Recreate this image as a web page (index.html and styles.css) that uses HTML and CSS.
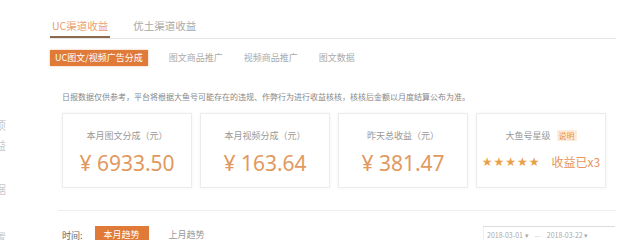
FILE: index.html
```html
<!DOCTYPE html>
<html lang="zh">
<head>
<meta charset="utf-8">
<link rel="stylesheet" href="styles.css">
</head>
<body>
<div class="page">
  <aside class="side">
    <span class="side-item s1">项</span>
    <span class="side-item s2">益</span>
    <span class="side-item s3">据</span>
    <span class="side-item s4">置</span>
  </aside>
  <main class="main">
    <nav class="tabs">
      <span class="tab active">UC渠道收益</span>
      <span class="tab">优土渠道收益</span>
    </nav>
    <div class="subtabs">
      <span class="subtab active">UC图文/视频广告分成</span>
      <span class="subtab">图文商品推广</span>
      <span class="subtab">视频商品推广</span>
      <span class="subtab">图文数据</span>
    </div>
    <p class="notice">日报数据仅供参考，平台将根据大鱼号可能存在的违规、作弊行为进行收益核核，核核后金额以月度结算公布为准。</p>
    <section class="stats">
      <div class="card">
        <div class="label">本月图文分成（元）</div>
        <div class="value">¥ 6933.50</div>
      </div>
      <div class="card">
        <div class="label">本月视频分成（元）</div>
        <div class="value">¥ 163.64</div>
      </div>
      <div class="card">
        <div class="label">昨天总收益（元）</div>
        <div class="value">¥ 381.47</div>
      </div>
      <div class="card">
        <div class="label">大鱼号星级 <span class="badge">说明</span></div>
        <div class="stars-row"><span class="stars">★★★★★</span><span class="mult">收益已x3</span></div>
      </div>
    </section>
    <div class="trend">
      <span class="trend-label">时间:</span>
      <span class="trend-btn active">本月趋势</span>
      <span class="trend-btn">上月趋势</span>
      <div class="dates">
        <span>2018-03-01 ▾</span>
        <span class="dash">—</span>
        <span>2018-03-22 ▾</span>
      </div>
    </div>
  </main>
</div>
</body>
</html>
```
FILE: styles.css
```css
* { box-sizing: border-box; }
html, body { margin: 0; background: #fff; }
body {
  font-family: "Noto Sans CJK SC", "Noto Sans", sans-serif;
  color: #999;
  overflow: hidden;
  width: 640px;
  height: 240px;
}
.page { display: flex; }
.side {
  width: 50px;
  display: flex;
  flex-direction: column;
  padding-top: 118px;
}
.side-item {
  display: block;
  width: 6px;
  overflow: hidden;
  direction: rtl;
  white-space: nowrap;
  font-size: 11px;
  line-height: 14px;
  color: #c8c8c8;
}
.s2 { margin-top: 6px; }
.s3 { margin-top: 30px; }
.s4 { margin-top: 34px; }

.main { width: 566px; padding-top: 16px; }
.tabs {
  display: flex;
  gap: 21px;
  border-bottom: 1px solid #e6e6e6;
  height: 23px;
}
.tab {
  font-size: 10.5px;
  line-height: 20px;
  height: 22px;
  padding: 0 2px;
  color: #a8a8a8;
  border-bottom: 2px solid transparent;
}
.tab.active { color: #e8a070; border-bottom-color: #8b6a4c; }

.subtabs {
  display: flex;
  align-items: center;
  gap: 21px;
  margin-top: 11px;
  height: 16px;
}
.subtab { font-size: 9px; line-height: 16px; color: #aaa; }
.subtab.active {
  background: #e07a38;
  color: #fff;
  padding: 0 5px;
  box-shadow: 0 0 2px rgba(224, 122, 56, .5);
}

.notice {
  margin: 26px 0 0 12px;
  font-size: 8px;
  line-height: 10px;
  color: #888;
  white-space: nowrap;
}

.stats {
  display: flex;
  gap: 8px;
  margin: 11px 0 0 8px;
  padding: 0 0 22px 4px;
  width: 558px;
  border-bottom: 1px solid #eeeeee;
}
.card {
  width: 130px;
  height: 75px;
  border: 1px solid #ececec;
  box-shadow: 0 0 3px rgba(0, 0, 0, .05);
  text-align: center;
  padding-top: 16px;
}
.label { font-size: 9px; line-height: 12px; color: #999; }
.value {
  margin-top: 8px;
  font-size: 21px;
  line-height: 26px;
  color: #e2995f;
  font-family: "Noto Sans", "Noto Sans CJK SC", sans-serif;
  font-weight: 400;
}
.badge {
  background: #fdecdc;
  color: #e8923e;
  font-size: 8px;
  padding: 0 2px;
  margin-left: 4px;
}
.stars-row {
  margin-top: 10px;
  display: flex;
  justify-content: center;
  align-items: center;
  gap: 11px;
  line-height: 20px;
}
.stars { color: #e8a048; font-size: 12px; letter-spacing: 1px; font-family: "DejaVu Sans", sans-serif; }
.mult { color: #e8935a; font-size: 12px; }

.trend {
  display: flex;
  align-items: center;
  margin: 15px 0 0 12px;
  height: 18px;
  width: 553px;
}
.trend-label { font-size: 9px; color: #666; margin-right: 12px; }
.trend-btn { font-size: 9px; line-height: 18px; color: #999; margin-right: 20px; }
.trend-btn.active { background: #e07a38; color: #fff; padding: 0 9px; }
.dates {
  margin-left: auto;
  display: flex;
  gap: 6px;
  white-space: nowrap;
  border-top: 1px solid #dcdcdc;
  border-left: 1px solid #eee;
  padding: 3px 0 0 3px;
  height: 18px;
  font-size: 7px;
  color: #aaa;
  width: 132px;
}
.dash { color: #ccc; }
```
